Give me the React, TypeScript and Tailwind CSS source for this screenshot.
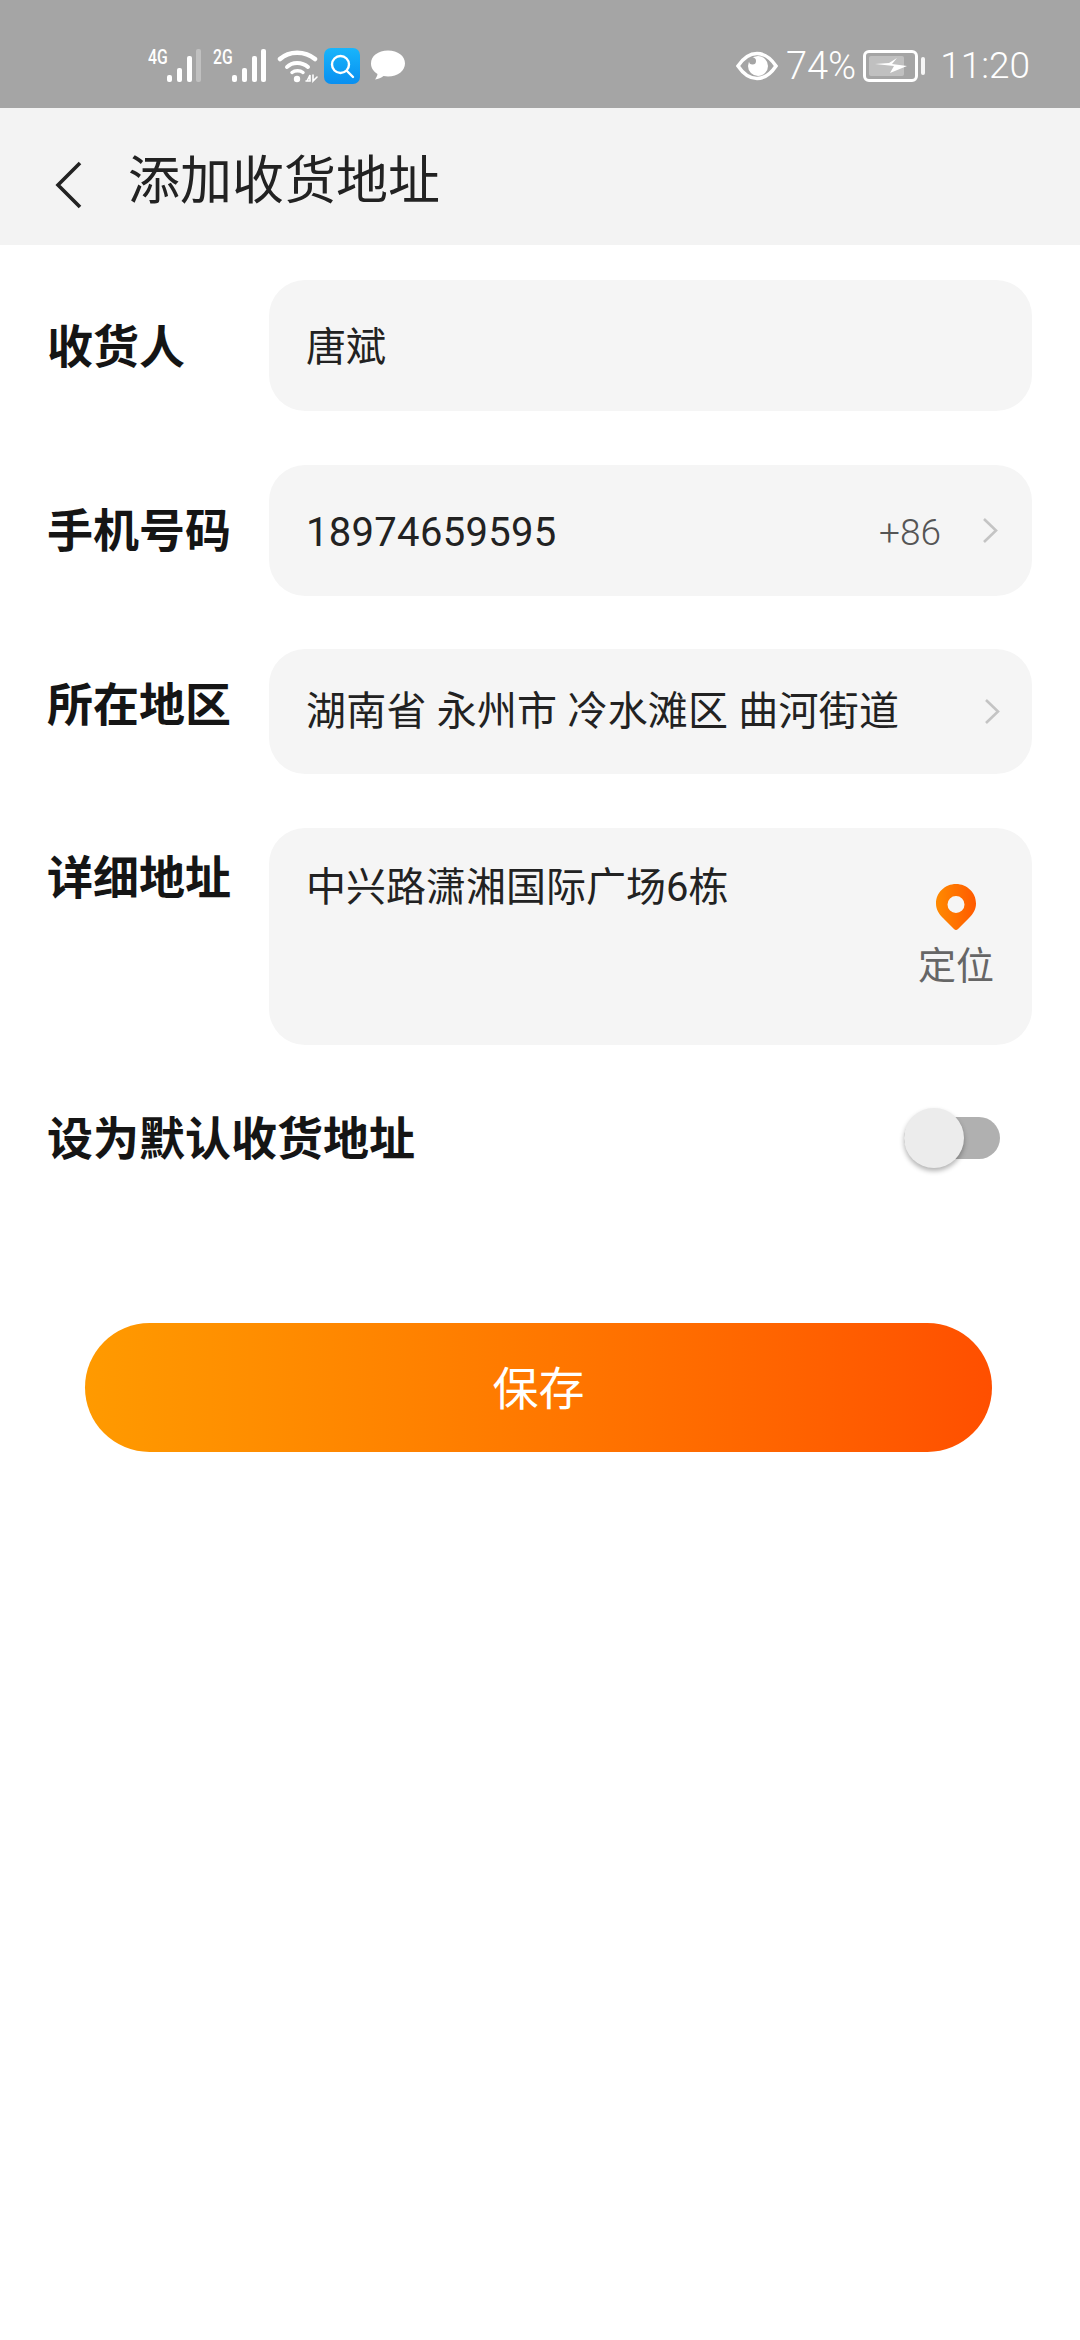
const cjk = "font-['Roboto','Noto_Sans_CJK_SC',sans-serif]";

function Signal({ label, dim }: { label: string; dim?: boolean }) {
  return (
    <div className="relative w-[54px] h-[36px]">
      <span className="absolute left-0 top-[-2px] text-[21px] leading-[22px] font-medium text-white font-['Roboto',sans-serif] scale-x-[0.75] origin-left">
        {label}
      </span>
      <svg className="absolute left-0 top-0" width="54" height="36" viewBox="0 0 54 36" fill="#fff">
        <rect x="19" y="27" width="5" height="7" rx="2" />
        <rect x="29" y="20" width="5" height="14" rx="2" />
        <rect x="39" y="8" width="5" height="26" rx="2" />
        <rect x="48" y="1" width="5" height="33" rx="2" fillOpacity={dim ? 0.3 : 1} />
      </svg>
    </div>
  );
}

function StatusBar() {
  return (
    <div className="h-[108px] bg-[#a5a5a5] flex items-center pl-[148px] pr-[50px] pt-[23px] text-white font-['Roboto',sans-serif]">
      <Signal label="4G" dim />
      <div className="w-[11px]" />
      <Signal label="2G" />
      <svg className="ml-[10px]" width="42" height="36" viewBox="0 0 42 36" fill="none" stroke="#fff" strokeLinecap="round">
        <path d="M3 11C12 2.500 28 2.500 38 11" strokeWidth="4.500" />
        <path d="M10 19C15 13.500 25 13.500 31 19" strokeWidth="4" />
        <path d="M15 24.500C18 22 23 22 26 24.500" strokeWidth="3.500" />
        <circle cx="20" cy="31" r="3.200" fill="#fff" stroke="none" />
        <path d="M30 33l3-6v6h-4M36 27v6l4-4" strokeWidth="1.600" />
      </svg>
      <div className="ml-[5px] w-[36px] h-[36px] rounded-[7px] bg-gradient-to-b from-[#19b5fb] to-[#0a8ff0] flex items-center justify-center">
        <svg width="28" height="28" viewBox="0 0 28 28" fill="none" stroke="#fff" strokeWidth="2.400" strokeLinecap="round">
          <circle cx="12.500" cy="12.500" r="8.500" />
          <path d="M19 19l6 6" />
        </svg>
      </div>
      <svg className="ml-[10px]" width="36" height="33" viewBox="0 0 36 32" fill="#fff">
        <path d="M18 1C8 1 1 6.500 1 14c0 4.500 2.600 8.200 6.500 10.500-.3 2.300-1.500 4.200-2.500 5.500 3.200-.4 6.400-1.800 8.500-3.400 1.500.3 3 .4 4.500.4 10 0 17-6 17-13C35 6.500 28 1 18 1z" />
      </svg>
      <div className="flex-1" />
      <svg width="42" height="30" viewBox="0 0 42 30" fill="none">
        <path d="M2 15C8 6 14 2.500 21 2.500S34 6 40 15c-6 9-12 12.500-19 12.500S8 24 2 15z" stroke="#fff" strokeWidth="3.500" />
        <circle cx="22" cy="15" r="10" fill="#fff" />
        <circle cx="16.500" cy="10" r="3.500" fill="#a5a5a5" />
      </svg>
      <span className="ml-[8px] text-[38px] leading-none font-light">74%</span>
      <div className="ml-[7px] w-[55px] h-[32px] rounded-[6px] border-[3px] border-white p-[3px] flex">
        <div className="relative w-[35px] h-full rounded-[2px] bg-white/30">
          <svg className="absolute left-[6px] top-[2px]" width="32" height="16" viewBox="0 0 32 16" fill="#fff">
            <path d="M0 6l14-1 8-5-5 6 15 2-17 7 4-7z" />
          </svg>
        </div>
      </div>
      <div className="ml-[3px] w-[4px] h-[18px] rounded-full bg-white/90" />
      <span className="ml-[15px] text-[37px] leading-none font-light">11:20</span>
    </div>
  );
}

function Row({
  label,
  labelClass,
  className,
  children,
}: {
  label: string;
  labelClass: string;
  className: string;
  children: React.ReactNode;
}) {
  return (
    <div className="flex pl-[47px] pr-[48px]">
      <div className={"w-[222px] shrink-0 text-[46px] leading-[60px] font-bold text-[#151515] " + labelClass}>{label}</div>
      <div className={"flex-1 rounded-[36px] bg-[#f5f5f5] pl-[37px] text-[#222] text-[40px] " + className}>{children}</div>
    </div>
  );
}

function Arrow({ className }: { className: string }) {
  return (
    <svg className={className} width="16" height="27" viewBox="0 0 16 27" fill="none" stroke="#c4c4c4" strokeWidth="2.600">
      <path d="M2 2l12 11.500L2 25" />
    </svg>
  );
}

export default function App() {
  return (
    <div className={"w-[1080px] h-[2340px] bg-white " + cjk}>
      <StatusBar />

      {/* Title bar */}
      <div className="h-[137px] bg-[#f3f3f3] flex items-center pt-[10px]">
        <svg className="ml-[54px] mt-[6px]" width="28" height="48" viewBox="0 0 28 48" fill="none" stroke="#222" strokeWidth="3.600">
          <path d="M26 2L4 24l22 22" />
        </svg>
        <span className="ml-[46px] text-[52px] leading-none text-[#222]">添加收货地址</span>
      </div>

      <div className="pt-[35px] flex flex-col">
        <Row label="收货人" labelClass="pt-[37px]" className="h-[131px] flex items-center pt-[5px]">
          唐斌
        </Row>

        <div className="h-[54px]" />
        <Row label="手机号码" labelClass="pt-[36px]" className="h-[131px] flex items-center pt-[4px]">
          <span className="tracking-[0.3px]">18974659595</span>
          <span className="ml-auto text-[37px] font-light text-[#555]">+86</span>
          <Arrow className="ml-[41px] mr-[34px] mb-[5px]" />
        </Row>

        <div className="h-[53px]" />
        <Row label="所在地区" labelClass="pt-[26px]" className="h-[125px] flex items-center">
          <span className="tracking-[0.2px]">湖南省 永州市 冷水滩区 曲河街道</span>
          <Arrow className="ml-auto mr-[32px]" />
        </Row>

        <div className="h-[54px]" />
        <Row label="详细地址" labelClass="pt-[20px]" className="h-[217px] relative pt-[32px] leading-[56px]">
          <span>中兴路潇湘国际广场6栋</span>
          <div className="absolute right-[38px] top-[55px] flex flex-col items-center">
            <svg width="42" height="48" viewBox="0 0 42 48">
              <defs>
                <linearGradient id="pin" x1="0" y1="0" x2="1" y2="0">
                  <stop offset="0" stopColor="#ff8a00" />
                  <stop offset="1" stopColor="#ff5a00" />
                </linearGradient>
              </defs>
              <path
                fillRule="evenodd"
                fill="url(#pin)"
                d="M21 1C10 1 1 9.500 1 20.500c0 6 3 10.500 7 14.500l11 11c1.200 1.200 2.800 1.200 4 0l11-11c4-4 7-8.500 7-14.500C41 9.500 32 1 21 1zm0 12a8.500 8.500 0 1 1 0 17 8.500 8.500 0 0 1 0-17z"
              />
            </svg>
            <span className="mt-[10px] text-[38px] leading-[50px] text-[#666]">定位</span>
          </div>
        </Row>

        {/* Default address toggle */}
        <div className="mt-[63px] h-[60px] flex items-center pl-[47px] pr-[80px]">
          <span className="text-[46px] font-bold text-[#151515] pt-[3px]">设为默认收货地址</span>
          <div className="ml-auto relative w-[96px] h-[42px] rounded-full bg-[#b0b0b0]">
            <div className="absolute left-0 top-[-9px] w-[60px] h-[60px] rounded-full bg-[#ececec] shadow-[0_3px_5px_rgba(0,0,0,0.3)]" />
          </div>
        </div>

        <div className="mt-[155px] ml-[85px] w-[907px] h-[129px] rounded-full bg-gradient-to-r from-[#ff9a00] to-[#ff4f00] flex items-center justify-center text-white text-[46px] pt-[3px]">
          保存
        </div>
      </div>
    </div>
  );
}
